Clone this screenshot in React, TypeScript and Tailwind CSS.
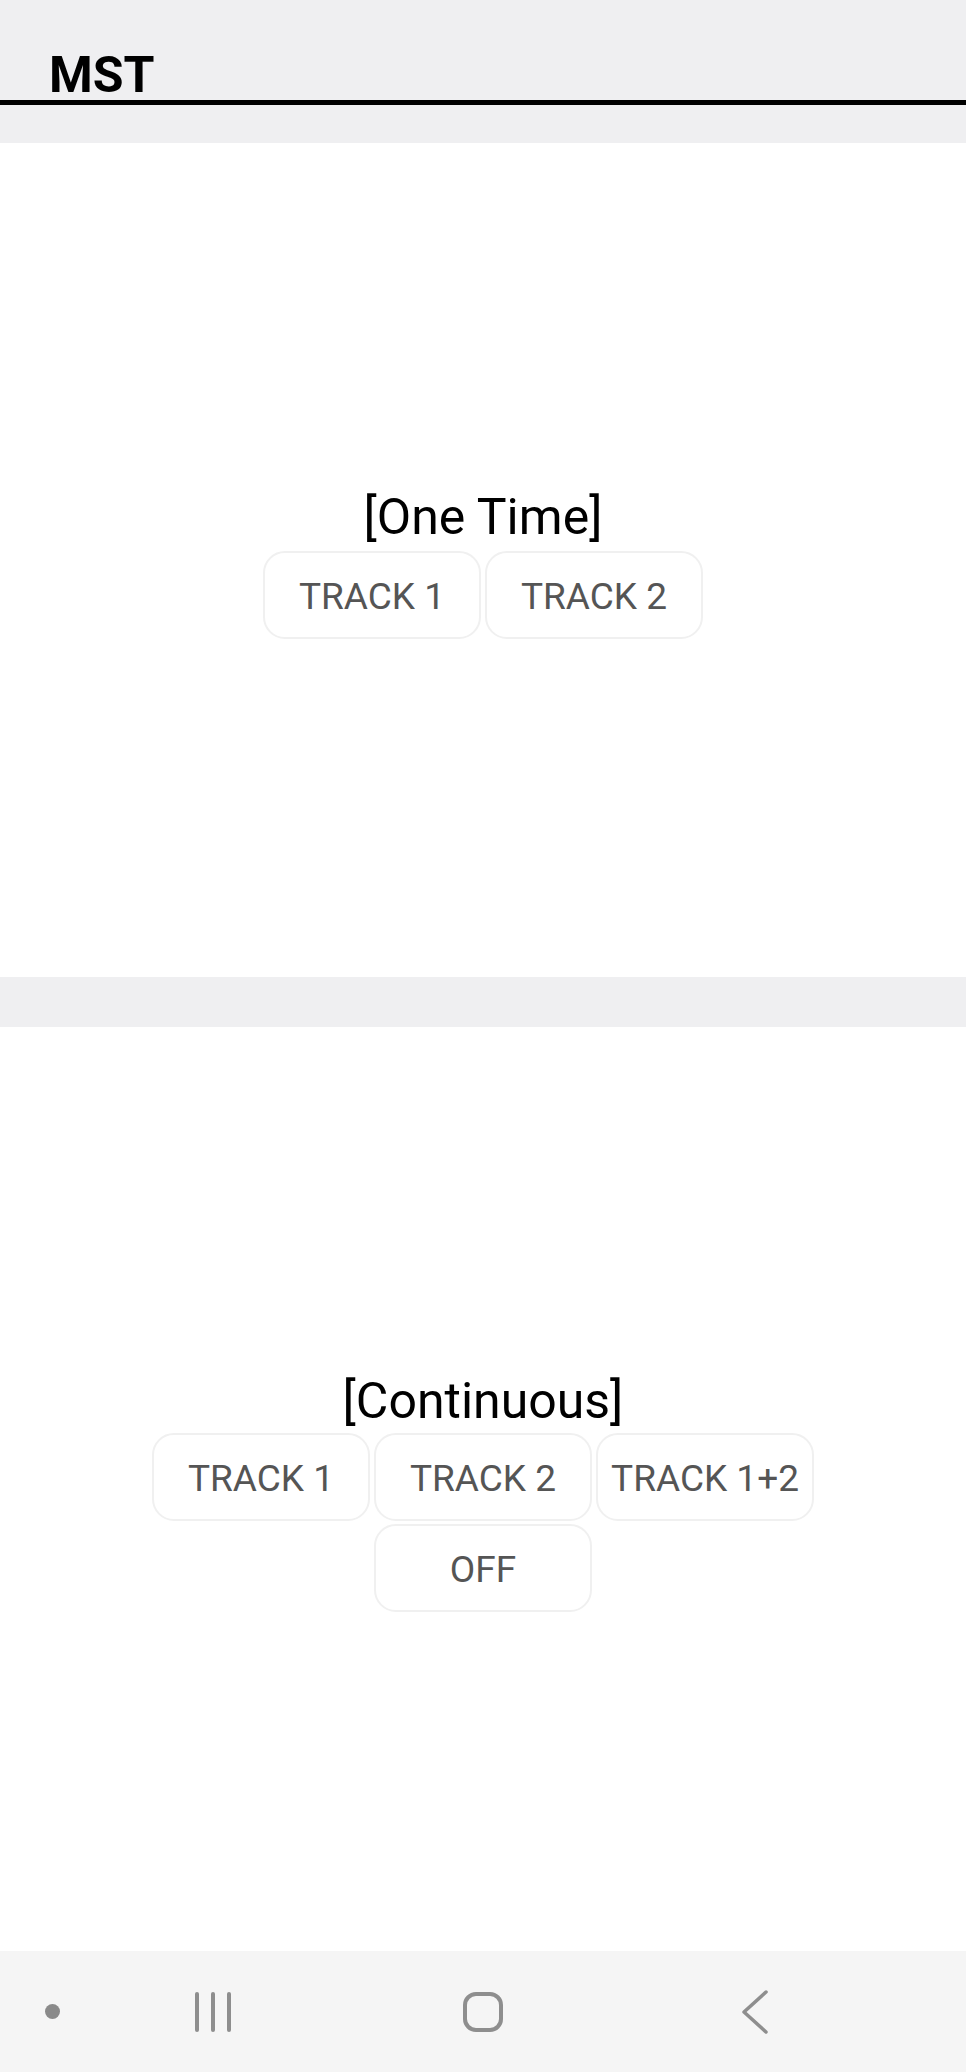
import React from "react";

function Btn({ label }: { label: string }) {
  return (
    <div className="flex h-[88px] w-[218px] items-center justify-center rounded-[22px] border-2 border-[#f0f0f0] bg-white pt-[3px] text-[37px] leading-none text-[#555555]">
      {label}
    </div>
  );
}

export default function App() {
  return (
    <div
      className="flex h-[2072px] w-[966px] flex-col bg-[#efeff1]"
      style={{ fontFamily: "Roboto, 'Noto Sans', sans-serif" }}
    >
      <div className="h-[100px] pl-[49px] pt-[50px] text-[50px] font-bold leading-[50px] text-black">
        MST
      </div>
      <div className="h-[5px] bg-black" />
      <div className="mt-[38px] flex h-[834px] flex-col items-center justify-center bg-white pt-[6px]">
        <div className="text-[50px] leading-[58px] text-black">[One Time]</div>
        <div className="mt-[5px] flex gap-[4px]">
          <Btn label="TRACK 1" />
          <Btn label="TRACK 2" />
        </div>
      </div>
      <div className="mt-[50px] flex h-[924px] flex-col items-center justify-center bg-white pt-[6px]">
        <div className="text-[50px] leading-[58px] text-black">[Continuous]</div>
        <div className="mt-[3px] flex flex-col items-center gap-[3px]">
          <div className="flex gap-[4px]">
            <Btn label="TRACK 1" />
            <Btn label="TRACK 2" />
            <Btn label="TRACK 1+2" />
          </div>
          <Btn label="OFF" />
        </div>
      </div>
      <div className="flex h-[121px] items-center bg-[#f5f5f5] pl-[45px]">
        <div className="h-[15px] w-[15px] rounded-full bg-[#8a8a8a]" />
        <svg className="ml-[133px]" width="40" height="44" viewBox="0 0 40 44">
          <g stroke="#8e8e8e" strokeWidth="4" strokeLinecap="round">
            <line x1="4" y1="4" x2="4" y2="40" />
            <line x1="20" y1="4" x2="20" y2="40" />
            <line x1="36" y1="4" x2="36" y2="40" />
          </g>
        </svg>
        <svg className="ml-[230px]" width="40" height="40" viewBox="0 0 40 40">
          <rect x="2" y="2" width="36" height="36" rx="11" fill="none" stroke="#8e8e8e" strokeWidth="4" />
        </svg>
        <svg className="ml-[237px]" width="30" height="44" viewBox="0 0 30 44">
          <polyline points="26,2 4,22 26,42" fill="none" stroke="#8e8e8e" strokeWidth="3.5" strokeLinecap="round" strokeLinejoin="round" />
        </svg>
      </div>
    </div>
  );
}
